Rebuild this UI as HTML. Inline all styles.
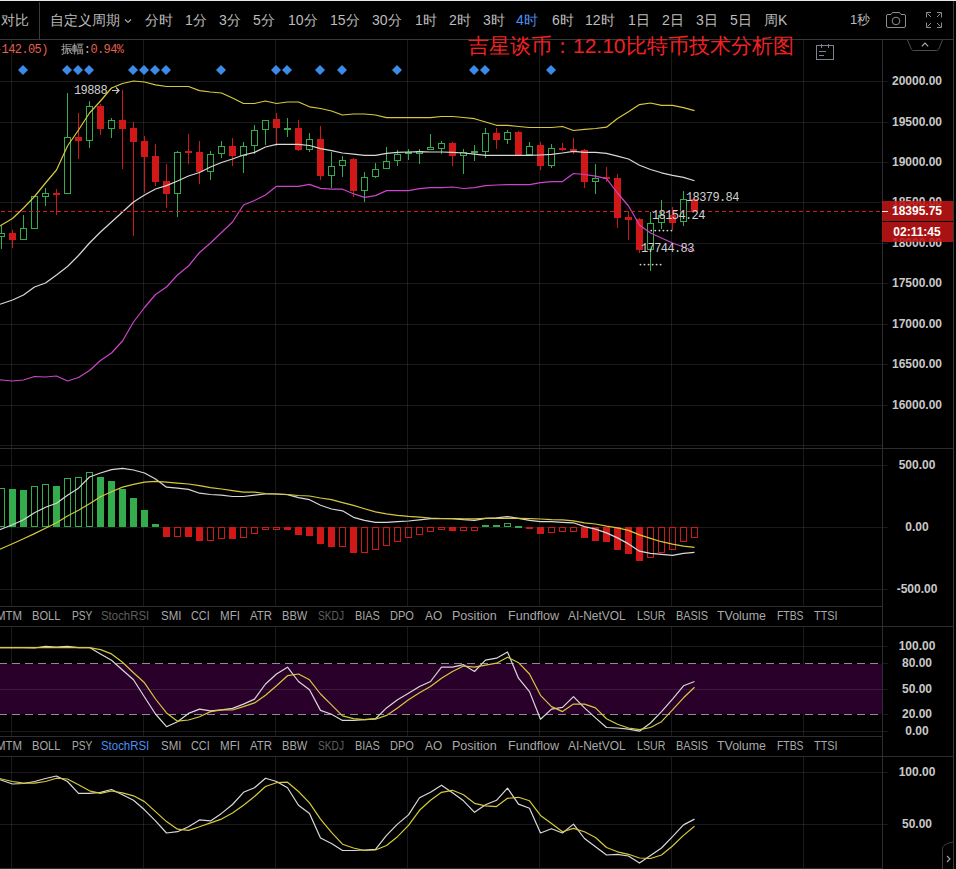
<!DOCTYPE html>
<html><head><meta charset="utf-8"><style>
html,body{margin:0;padding:0;background:#000;}
body{width:956px;height:869px;position:relative;overflow:hidden;font-family:"Liberation Sans", sans-serif;}
svg{position:absolute;left:0;top:0;}
.t{position:absolute;white-space:nowrap;line-height:1;}
.c{text-align:center;}
rect,line{shape-rendering:crispEdges;}
</style></head><body>
<svg width="956" height="869" viewBox="0 0 956 869">
<line x1="11.5" y1="40" x2="11.5" y2="448" stroke="rgba(255,255,255,0.1)"/>
<line x1="11.5" y1="448" x2="11.5" y2="606" stroke="rgba(255,255,255,0.1)"/>
<line x1="11.5" y1="626" x2="11.5" y2="736" stroke="rgba(255,255,255,0.1)"/>
<line x1="11.5" y1="756" x2="11.5" y2="869" stroke="rgba(255,255,255,0.1)"/>
<line x1="143.5" y1="40" x2="143.5" y2="448" stroke="rgba(255,255,255,0.1)"/>
<line x1="143.5" y1="448" x2="143.5" y2="606" stroke="rgba(255,255,255,0.1)"/>
<line x1="143.5" y1="626" x2="143.5" y2="736" stroke="rgba(255,255,255,0.1)"/>
<line x1="143.5" y1="756" x2="143.5" y2="869" stroke="rgba(255,255,255,0.1)"/>
<line x1="275.5" y1="40" x2="275.5" y2="448" stroke="rgba(255,255,255,0.1)"/>
<line x1="275.5" y1="448" x2="275.5" y2="606" stroke="rgba(255,255,255,0.1)"/>
<line x1="275.5" y1="626" x2="275.5" y2="736" stroke="rgba(255,255,255,0.1)"/>
<line x1="275.5" y1="756" x2="275.5" y2="869" stroke="rgba(255,255,255,0.1)"/>
<line x1="407.5" y1="40" x2="407.5" y2="448" stroke="rgba(255,255,255,0.1)"/>
<line x1="407.5" y1="448" x2="407.5" y2="606" stroke="rgba(255,255,255,0.1)"/>
<line x1="407.5" y1="626" x2="407.5" y2="736" stroke="rgba(255,255,255,0.1)"/>
<line x1="407.5" y1="756" x2="407.5" y2="869" stroke="rgba(255,255,255,0.1)"/>
<line x1="539.5" y1="40" x2="539.5" y2="448" stroke="rgba(255,255,255,0.1)"/>
<line x1="539.5" y1="448" x2="539.5" y2="606" stroke="rgba(255,255,255,0.1)"/>
<line x1="539.5" y1="626" x2="539.5" y2="736" stroke="rgba(255,255,255,0.1)"/>
<line x1="539.5" y1="756" x2="539.5" y2="869" stroke="rgba(255,255,255,0.1)"/>
<line x1="671.5" y1="40" x2="671.5" y2="448" stroke="rgba(255,255,255,0.1)"/>
<line x1="671.5" y1="448" x2="671.5" y2="606" stroke="rgba(255,255,255,0.1)"/>
<line x1="671.5" y1="626" x2="671.5" y2="736" stroke="rgba(255,255,255,0.1)"/>
<line x1="671.5" y1="756" x2="671.5" y2="869" stroke="rgba(255,255,255,0.1)"/>
<line x1="803.5" y1="40" x2="803.5" y2="448" stroke="rgba(255,255,255,0.1)"/>
<line x1="803.5" y1="448" x2="803.5" y2="606" stroke="rgba(255,255,255,0.1)"/>
<line x1="803.5" y1="626" x2="803.5" y2="736" stroke="rgba(255,255,255,0.1)"/>
<line x1="803.5" y1="756" x2="803.5" y2="869" stroke="rgba(255,255,255,0.1)"/>
<line x1="0" y1="81.5" x2="888" y2="81.5" stroke="rgba(255,255,255,0.1)"/>
<line x1="0" y1="122.5" x2="888" y2="122.5" stroke="rgba(255,255,255,0.1)"/>
<line x1="0" y1="162.5" x2="888" y2="162.5" stroke="rgba(255,255,255,0.1)"/>
<line x1="0" y1="202.5" x2="888" y2="202.5" stroke="rgba(255,255,255,0.1)"/>
<line x1="0" y1="243.5" x2="888" y2="243.5" stroke="rgba(255,255,255,0.1)"/>
<line x1="0" y1="283.5" x2="888" y2="283.5" stroke="rgba(255,255,255,0.1)"/>
<line x1="0" y1="324.5" x2="888" y2="324.5" stroke="rgba(255,255,255,0.1)"/>
<line x1="0" y1="364.5" x2="888" y2="364.5" stroke="rgba(255,255,255,0.1)"/>
<line x1="0" y1="405.5" x2="888" y2="405.5" stroke="rgba(255,255,255,0.1)"/>
<line x1="0" y1="445.5" x2="882" y2="445.5" stroke="rgba(255,255,255,0.1)"/>
<line x1="0" y1="465.5" x2="888" y2="465.5" stroke="rgba(255,255,255,0.1)"/>
<line x1="0" y1="527.5" x2="888" y2="527.5" stroke="rgba(255,255,255,0.1)"/>
<line x1="0" y1="589.5" x2="888" y2="589.5" stroke="rgba(255,255,255,0.1)"/>
<rect x="0" y="664" width="882" height="50" fill="#29002a"/>
<line x1="0" y1="646.5" x2="888" y2="646.5" stroke="rgba(255,255,255,0.1)"/>
<line x1="0" y1="689.5" x2="888" y2="689.5" stroke="rgba(255,255,255,0.1)"/>
<line x1="0" y1="731.5" x2="888" y2="731.5" stroke="rgba(255,255,255,0.1)"/>
<line x1="0" y1="663.5" x2="882" y2="663.5" stroke="#8c8c94" stroke-dasharray="8 5" stroke-dashoffset="1"/>
<line x1="882" y1="663.5" x2="888" y2="663.5" stroke="rgba(255,255,255,0.1)"/>
<line x1="0" y1="714.5" x2="882" y2="714.5" stroke="#8c8c94" stroke-dasharray="8 5" stroke-dashoffset="1"/>
<line x1="882" y1="714.5" x2="888" y2="714.5" stroke="rgba(255,255,255,0.1)"/>
<line x1="0" y1="772.5" x2="888" y2="772.5" stroke="rgba(255,255,255,0.1)"/>
<line x1="0" y1="824.5" x2="888" y2="824.5" stroke="rgba(255,255,255,0.1)"/>
<rect x="0" y="0" width="956" height="1" fill="#e6e6e6"/>
<line x1="0" y1="39.5" x2="954" y2="39.5" stroke="#383838"/>
<line x1="39.5" y1="2" x2="39.5" y2="39" stroke="#3a3a3a"/>
<line x1="882.5" y1="40" x2="882.5" y2="869" stroke="#2c2d33"/>
<line x1="953.5" y1="1" x2="953.5" y2="869" stroke="#3a3a3a"/>
<line x1="0" y1="448.5" x2="954" y2="448.5" stroke="#2c2d33"/>
<line x1="0" y1="606.5" x2="882" y2="606.5" stroke="#2c2d33"/>
<line x1="0" y1="626.5" x2="954" y2="626.5" stroke="#2c2d33"/>
<line x1="0" y1="736.5" x2="882" y2="736.5" stroke="#2c2d33"/>
<line x1="0" y1="756.5" x2="954" y2="756.5" stroke="#2c2d33"/>
<line x1="0" y1="868.5" x2="883" y2="868.5" stroke="#2c2d33"/>
<rect x="1" y="226" width="1" height="7" fill="#34ac4e"/>
<rect x="1" y="237" width="1" height="12" fill="#34ac4e"/>
<rect x="-1.5" y="233.5" width="6" height="3" fill="none" stroke="#34ac4e"/>
<rect x="12" y="230" width="1" height="3" fill="#d11818"/>
<rect x="12" y="240" width="1" height="8" fill="#d11818"/>
<rect x="9" y="233" width="7" height="7" fill="#d11818"/>
<rect x="23" y="215" width="1" height="13" fill="#34ac4e"/>
<rect x="20.5" y="228.5" width="6" height="11" fill="none" stroke="#34ac4e"/>
<rect x="31.5" y="196.5" width="6" height="32" fill="none" stroke="#34ac4e"/>
<rect x="45" y="188" width="1" height="5" fill="#34ac4e"/>
<rect x="45" y="197" width="1" height="9" fill="#34ac4e"/>
<rect x="42.5" y="193.5" width="6" height="3" fill="none" stroke="#34ac4e"/>
<rect x="56" y="189" width="1" height="4" fill="#d11818"/>
<rect x="56" y="195" width="1" height="20" fill="#d11818"/>
<rect x="53" y="193" width="7" height="2" fill="#d11818"/>
<rect x="67" y="93" width="1" height="44" fill="#34ac4e"/>
<rect x="64.5" y="137.5" width="6" height="56" fill="none" stroke="#34ac4e"/>
<rect x="78" y="113" width="1" height="24" fill="#d11818"/>
<rect x="78" y="141" width="1" height="18" fill="#d11818"/>
<rect x="75" y="137" width="7" height="4" fill="#d11818"/>
<rect x="89" y="101" width="1" height="5" fill="#34ac4e"/>
<rect x="89" y="141" width="1" height="7" fill="#34ac4e"/>
<rect x="86.5" y="106.5" width="6" height="34" fill="none" stroke="#34ac4e"/>
<rect x="100" y="104" width="1" height="2" fill="#d11818"/>
<rect x="100" y="129" width="1" height="6" fill="#d11818"/>
<rect x="97" y="106" width="7" height="23" fill="#d11818"/>
<rect x="111" y="118" width="1" height="2" fill="#34ac4e"/>
<rect x="111" y="129" width="1" height="9" fill="#34ac4e"/>
<rect x="108.5" y="120.5" width="6" height="8" fill="none" stroke="#34ac4e"/>
<rect x="122" y="90" width="1" height="30" fill="#d11818"/>
<rect x="122" y="129" width="1" height="40" fill="#d11818"/>
<rect x="119" y="120" width="7" height="9" fill="#d11818"/>
<rect x="133" y="122" width="1" height="6" fill="#d11818"/>
<rect x="133" y="142" width="1" height="94" fill="#d11818"/>
<rect x="130" y="128" width="7" height="14" fill="#d11818"/>
<rect x="144" y="136" width="1" height="5" fill="#d11818"/>
<rect x="144" y="157" width="1" height="36" fill="#d11818"/>
<rect x="141" y="141" width="7" height="16" fill="#d11818"/>
<rect x="155" y="144" width="1" height="12" fill="#d11818"/>
<rect x="155" y="182" width="1" height="4" fill="#d11818"/>
<rect x="152" y="156" width="7" height="26" fill="#d11818"/>
<rect x="166" y="164" width="1" height="17" fill="#d11818"/>
<rect x="166" y="194" width="1" height="14" fill="#d11818"/>
<rect x="163" y="181" width="7" height="13" fill="#d11818"/>
<rect x="177" y="151" width="1" height="1" fill="#34ac4e"/>
<rect x="177" y="194" width="1" height="23" fill="#34ac4e"/>
<rect x="174.5" y="152.5" width="6" height="41" fill="none" stroke="#34ac4e"/>
<rect x="188" y="134" width="1" height="17" fill="#d11818"/>
<rect x="188" y="153" width="1" height="11" fill="#d11818"/>
<rect x="185" y="151" width="7" height="2" fill="#d11818"/>
<rect x="199" y="141" width="1" height="11" fill="#d11818"/>
<rect x="199" y="172" width="1" height="12" fill="#d11818"/>
<rect x="196" y="152" width="7" height="20" fill="#d11818"/>
<rect x="210" y="151" width="1" height="3" fill="#34ac4e"/>
<rect x="210" y="172" width="1" height="8" fill="#34ac4e"/>
<rect x="207.5" y="154.5" width="6" height="17" fill="none" stroke="#34ac4e"/>
<rect x="221" y="141" width="1" height="5" fill="#34ac4e"/>
<rect x="221" y="154" width="1" height="4" fill="#34ac4e"/>
<rect x="218.5" y="146.5" width="6" height="7" fill="none" stroke="#34ac4e"/>
<rect x="232" y="138" width="1" height="8" fill="#d11818"/>
<rect x="232" y="156" width="1" height="10" fill="#d11818"/>
<rect x="229" y="146" width="7" height="10" fill="#d11818"/>
<rect x="243" y="142" width="1" height="4" fill="#34ac4e"/>
<rect x="243" y="156" width="1" height="17" fill="#34ac4e"/>
<rect x="240.5" y="146.5" width="6" height="9" fill="none" stroke="#34ac4e"/>
<rect x="254" y="125" width="1" height="5" fill="#34ac4e"/>
<rect x="254" y="146" width="1" height="8" fill="#34ac4e"/>
<rect x="251.5" y="130.5" width="6" height="15" fill="none" stroke="#34ac4e"/>
<rect x="265" y="130" width="1" height="15" fill="#34ac4e"/>
<rect x="262.5" y="120.5" width="6" height="9" fill="none" stroke="#34ac4e"/>
<rect x="276" y="113" width="1" height="6" fill="#d11818"/>
<rect x="276" y="128" width="1" height="18" fill="#d11818"/>
<rect x="273" y="119" width="7" height="9" fill="#d11818"/>
<rect x="287" y="118" width="1" height="10" fill="#34ac4e"/>
<rect x="287" y="130" width="1" height="7" fill="#34ac4e"/>
<rect x="284.5" y="128.5" width="6" height="1" fill="none" stroke="#34ac4e"/>
<rect x="298" y="120" width="1" height="8" fill="#d11818"/>
<rect x="298" y="150" width="1" height="1" fill="#d11818"/>
<rect x="295" y="128" width="7" height="22" fill="#d11818"/>
<rect x="309" y="133" width="1" height="6" fill="#34ac4e"/>
<rect x="309" y="150" width="1" height="2" fill="#34ac4e"/>
<rect x="306.5" y="139.5" width="6" height="10" fill="none" stroke="#34ac4e"/>
<rect x="320" y="126" width="1" height="13" fill="#d11818"/>
<rect x="320" y="176" width="1" height="4" fill="#d11818"/>
<rect x="317" y="139" width="7" height="37" fill="#d11818"/>
<rect x="331" y="152" width="1" height="14" fill="#34ac4e"/>
<rect x="331" y="176" width="1" height="12" fill="#34ac4e"/>
<rect x="328.5" y="166.5" width="6" height="9" fill="none" stroke="#34ac4e"/>
<rect x="342" y="156" width="1" height="4" fill="#34ac4e"/>
<rect x="342" y="166" width="1" height="11" fill="#34ac4e"/>
<rect x="339.5" y="160.5" width="6" height="5" fill="none" stroke="#34ac4e"/>
<rect x="353" y="158" width="1" height="1" fill="#d11818"/>
<rect x="353" y="191" width="1" height="6" fill="#d11818"/>
<rect x="350" y="159" width="7" height="32" fill="#d11818"/>
<rect x="364" y="172" width="1" height="5" fill="#34ac4e"/>
<rect x="364" y="191" width="1" height="11" fill="#34ac4e"/>
<rect x="361.5" y="177.5" width="6" height="13" fill="none" stroke="#34ac4e"/>
<rect x="375" y="163" width="1" height="6" fill="#34ac4e"/>
<rect x="375" y="177" width="1" height="1" fill="#34ac4e"/>
<rect x="372.5" y="169.5" width="6" height="7" fill="none" stroke="#34ac4e"/>
<rect x="386" y="147" width="1" height="14" fill="#34ac4e"/>
<rect x="383.5" y="161.5" width="6" height="7" fill="none" stroke="#34ac4e"/>
<rect x="397" y="150" width="1" height="4" fill="#34ac4e"/>
<rect x="397" y="161" width="1" height="5" fill="#34ac4e"/>
<rect x="394.5" y="154.5" width="6" height="6" fill="none" stroke="#34ac4e"/>
<rect x="408" y="149" width="1" height="3" fill="#34ac4e"/>
<rect x="408" y="154" width="1" height="6" fill="#34ac4e"/>
<rect x="405.5" y="152.5" width="6" height="1" fill="none" stroke="#34ac4e"/>
<rect x="419" y="149" width="1" height="2" fill="#34ac4e"/>
<rect x="419" y="154" width="1" height="10" fill="#34ac4e"/>
<rect x="416.5" y="151.5" width="6" height="2" fill="none" stroke="#34ac4e"/>
<rect x="430" y="134" width="1" height="13" fill="#34ac4e"/>
<rect x="427.5" y="147.5" width="6" height="2" fill="none" stroke="#34ac4e"/>
<rect x="441" y="141" width="1" height="2" fill="#34ac4e"/>
<rect x="441" y="149" width="1" height="5" fill="#34ac4e"/>
<rect x="438.5" y="143.5" width="6" height="5" fill="none" stroke="#34ac4e"/>
<rect x="452" y="142" width="1" height="1" fill="#d11818"/>
<rect x="452" y="156" width="1" height="10" fill="#d11818"/>
<rect x="449" y="143" width="7" height="13" fill="#d11818"/>
<rect x="463" y="149" width="1" height="3" fill="#34ac4e"/>
<rect x="463" y="156" width="1" height="18" fill="#34ac4e"/>
<rect x="460.5" y="152.5" width="6" height="3" fill="none" stroke="#34ac4e"/>
<rect x="474" y="145" width="1" height="6" fill="#34ac4e"/>
<rect x="474" y="153" width="1" height="8" fill="#34ac4e"/>
<rect x="471.5" y="151.5" width="6" height="1" fill="none" stroke="#34ac4e"/>
<rect x="485" y="128" width="1" height="5" fill="#34ac4e"/>
<rect x="485" y="152" width="1" height="6" fill="#34ac4e"/>
<rect x="482.5" y="133.5" width="6" height="18" fill="none" stroke="#34ac4e"/>
<rect x="496" y="128" width="1" height="5" fill="#d11818"/>
<rect x="496" y="140" width="1" height="9" fill="#d11818"/>
<rect x="493" y="133" width="7" height="7" fill="#d11818"/>
<rect x="507" y="130" width="1" height="2" fill="#34ac4e"/>
<rect x="507" y="140" width="1" height="4" fill="#34ac4e"/>
<rect x="504.5" y="132.5" width="6" height="7" fill="none" stroke="#34ac4e"/>
<rect x="518" y="131" width="1" height="1" fill="#d11818"/>
<rect x="515" y="132" width="7" height="23" fill="#d11818"/>
<rect x="529" y="142" width="1" height="4" fill="#34ac4e"/>
<rect x="526.5" y="146.5" width="6" height="8" fill="none" stroke="#34ac4e"/>
<rect x="540" y="142" width="1" height="3" fill="#d11818"/>
<rect x="540" y="166" width="1" height="4" fill="#d11818"/>
<rect x="537" y="145" width="7" height="21" fill="#d11818"/>
<rect x="551" y="144" width="1" height="4" fill="#34ac4e"/>
<rect x="551" y="166" width="1" height="2" fill="#34ac4e"/>
<rect x="548.5" y="148.5" width="6" height="17" fill="none" stroke="#34ac4e"/>
<rect x="562" y="143" width="1" height="5" fill="#d11818"/>
<rect x="562" y="150" width="1" height="1" fill="#d11818"/>
<rect x="559" y="148" width="7" height="2" fill="#d11818"/>
<rect x="573" y="138" width="1" height="11" fill="#d11818"/>
<rect x="573" y="151" width="1" height="3" fill="#d11818"/>
<rect x="570" y="149" width="7" height="2" fill="#d11818"/>
<rect x="584" y="149" width="1" height="1" fill="#d11818"/>
<rect x="584" y="182" width="1" height="6" fill="#d11818"/>
<rect x="581" y="150" width="7" height="32" fill="#d11818"/>
<rect x="595" y="164" width="1" height="14" fill="#34ac4e"/>
<rect x="595" y="182" width="1" height="12" fill="#34ac4e"/>
<rect x="592.5" y="178.5" width="6" height="3" fill="none" stroke="#34ac4e"/>
<rect x="606" y="167" width="1" height="10" fill="#d11818"/>
<rect x="606" y="179" width="1" height="3" fill="#d11818"/>
<rect x="603" y="177" width="7" height="2" fill="#d11818"/>
<rect x="617" y="174" width="1" height="4" fill="#d11818"/>
<rect x="617" y="218" width="1" height="10" fill="#d11818"/>
<rect x="614" y="178" width="7" height="40" fill="#d11818"/>
<rect x="628" y="211" width="1" height="6" fill="#d11818"/>
<rect x="628" y="220" width="1" height="20" fill="#d11818"/>
<rect x="625" y="217" width="7" height="3" fill="#d11818"/>
<rect x="639" y="218" width="1" height="1" fill="#d11818"/>
<rect x="639" y="250" width="1" height="3" fill="#d11818"/>
<rect x="636" y="219" width="7" height="31" fill="#d11818"/>
<rect x="650" y="212" width="1" height="11" fill="#34ac4e"/>
<rect x="650" y="250" width="1" height="21" fill="#34ac4e"/>
<rect x="647.5" y="223.5" width="6" height="26" fill="none" stroke="#34ac4e"/>
<rect x="661" y="200" width="1" height="15" fill="#34ac4e"/>
<rect x="661" y="223" width="1" height="6" fill="#34ac4e"/>
<rect x="658.5" y="215.5" width="6" height="7" fill="none" stroke="#34ac4e"/>
<rect x="672" y="207" width="1" height="8" fill="#d11818"/>
<rect x="672" y="223" width="1" height="7" fill="#d11818"/>
<rect x="669" y="215" width="7" height="8" fill="#d11818"/>
<rect x="683" y="191" width="1" height="8" fill="#34ac4e"/>
<rect x="683" y="222" width="1" height="4" fill="#34ac4e"/>
<rect x="680.5" y="199.5" width="6" height="22" fill="none" stroke="#34ac4e"/>
<rect x="691" y="199" width="7" height="13" fill="#d11818"/>
<polyline points="0,379.9 1.5,380 12.5,381 23.5,380 34.5,376.5 45.5,377 56.5,376 67.5,381 78.5,377.5 89.5,370.5 100.5,360.5 111.5,353 122.5,341 133.5,322 144.5,307.5 155.5,294.5 166.5,287 177.5,275 188.5,266 199.5,252.5 210.5,243 221.5,232.5 232.5,222 243.5,205 254.5,200.5 265.5,195 276.5,186.3 287.5,186.3 298.5,186.3 309.5,184.4 320.5,188.4 331.5,189.2 342.5,189.2 353.5,193.8 364.5,197.4 375.5,195.6 386.5,190.6 397.5,190.6 408.5,190.6 419.5,188.6 430.5,187.6 441.5,187.6 452.5,187 463.5,188.5 474.5,187.6 485.5,185.6 496.5,185 507.5,184.6 518.5,184.6 529.5,184.6 540.5,182.6 551.5,181.6 562.5,181.6 573.5,173.5 584.5,174.5 595.5,176.2 606.5,178.7 617.5,193 628.5,206 639.5,225 650.5,233 661.5,238 672.5,243 683.5,247 694.5,251" fill="none" stroke="#cc44c8" stroke-width="1.2" stroke-linejoin="round"/>
<polyline points="0,304.3 1.5,303.8 12.5,300 23.5,295 34.5,287 45.5,283 56.5,275 67.5,266.5 78.5,255.5 89.5,243 100.5,232 111.5,222 122.5,212 133.5,202 144.5,195 155.5,189 166.5,185.6 177.5,181 188.5,176 199.5,172.5 210.5,167 221.5,162.5 232.5,159 243.5,155 254.5,152.4 265.5,147 276.5,144.3 287.5,144.3 298.5,144.3 309.5,145.5 320.5,148.6 331.5,150.6 342.5,153 353.5,154.2 364.5,155.4 375.5,155.4 386.5,153.4 397.5,152.4 408.5,152 419.5,151.6 430.5,152 441.5,152 452.5,152.4 463.5,153 474.5,154.2 485.5,155.4 496.5,155.4 507.5,155.4 518.5,155.4 529.5,155.4 540.5,155 551.5,154.4 562.5,153 573.5,151.4 584.5,152.3 595.5,152.4 606.5,153.3 617.5,156.1 628.5,159 639.5,165.3 650.5,169.5 661.5,172.8 672.5,175.4 683.5,177.4 694.5,180.7" fill="none" stroke="#d8d8d8" stroke-width="1.2" stroke-linejoin="round"/>
<polyline points="0,225.9 1.5,225 12.5,218.5 23.5,208 34.5,196.5 45.5,183 56.5,170 67.5,146 78.5,130 89.5,113 100.5,101 111.5,88 122.5,83.5 133.5,81 144.5,82 155.5,84.8 166.5,86.5 177.5,86.5 188.5,86.5 199.5,90.6 210.5,92 221.5,93 232.5,98 243.5,103.5 254.5,103.5 265.5,101 276.5,103.5 287.5,102 298.5,102 309.5,106.8 320.5,108.5 331.5,111 342.5,115 353.5,114 364.5,114 375.5,115 386.5,117.7 397.5,117.7 408.5,117.7 419.5,117.7 430.5,117.7 441.5,116.5 452.5,116.5 463.5,117.5 474.5,118.7 485.5,122 496.5,125.3 507.5,125.3 518.5,126.5 529.5,127.5 540.5,127.5 551.5,127.5 562.5,126.5 573.5,130.5 584.5,129.3 595.5,128.5 606.5,127.2 617.5,118.5 628.5,111.8 639.5,104.6 650.5,103 661.5,105.4 672.5,105.4 683.5,107.6 694.5,110.6" fill="none" stroke="#d6c83c" stroke-width="1.2" stroke-linejoin="round"/>
<line x1="0" y1="211.5" x2="882" y2="211.5" stroke="#d41c1c" stroke-dasharray="4 3" stroke-dashoffset="-1"/>
<line x1="882" y1="211.5" x2="888" y2="211.5" stroke="#e8e8e8"/>
<circle cx="651.3" cy="230.6" r="0.95" fill="#d0d0d0"/>
<circle cx="655.3" cy="230.6" r="0.95" fill="#d0d0d0"/>
<circle cx="659.4" cy="230.6" r="0.95" fill="#d0d0d0"/>
<circle cx="663.4" cy="230.6" r="0.95" fill="#d0d0d0"/>
<circle cx="667.4" cy="230.6" r="0.95" fill="#d0d0d0"/>
<circle cx="671.4" cy="230.6" r="0.95" fill="#d0d0d0"/>
<circle cx="640.5" cy="264.6" r="0.95" fill="#d0d0d0"/>
<circle cx="644.5" cy="264.6" r="0.95" fill="#d0d0d0"/>
<circle cx="648.6" cy="264.6" r="0.95" fill="#d0d0d0"/>
<circle cx="652.6" cy="264.6" r="0.95" fill="#d0d0d0"/>
<circle cx="656.6" cy="264.6" r="0.95" fill="#d0d0d0"/>
<circle cx="660.6" cy="264.6" r="0.95" fill="#d0d0d0"/>
<path d="M112 90.5 H119 M116 87.5 L119 90.5 L116 93.5" fill="none" stroke="#c8c8c8" stroke-width="1.2"/>
<path d="M125 19.5 L128 22.3 L131 19.5" fill="none" stroke="#b4b4b4" stroke-width="1.1"/>
<path d="M23.0 65L28.0 70L23.0 75L18.0 70Z" fill="#3d8be8"/>
<path d="M67.0 65L72.0 70L67.0 75L62.0 70Z" fill="#3d8be8"/>
<path d="M78.0 65L83.0 70L78.0 75L73.0 70Z" fill="#3d8be8"/>
<path d="M89.0 65L94.0 70L89.0 75L84.0 70Z" fill="#3d8be8"/>
<path d="M133.0 65L138.0 70L133.0 75L128.0 70Z" fill="#3d8be8"/>
<path d="M144.0 65L149.0 70L144.0 75L139.0 70Z" fill="#3d8be8"/>
<path d="M155.0 65L160.0 70L155.0 75L150.0 70Z" fill="#3d8be8"/>
<path d="M166.0 65L171.0 70L166.0 75L161.0 70Z" fill="#3d8be8"/>
<path d="M221.0 65L226.0 70L221.0 75L216.0 70Z" fill="#3d8be8"/>
<path d="M276.0 65L281.0 70L276.0 75L271.0 70Z" fill="#3d8be8"/>
<path d="M287.0 65L292.0 70L287.0 75L282.0 70Z" fill="#3d8be8"/>
<path d="M320.0 65L325.0 70L320.0 75L315.0 70Z" fill="#3d8be8"/>
<path d="M342.0 65L347.0 70L342.0 75L337.0 70Z" fill="#3d8be8"/>
<path d="M397.0 65L402.0 70L397.0 75L392.0 70Z" fill="#3d8be8"/>
<path d="M474.0 65L479.0 70L474.0 75L469.0 70Z" fill="#3d8be8"/>
<path d="M485.0 65L490.0 70L485.0 75L480.0 70Z" fill="#3d8be8"/>
<path d="M551.0 65L556.0 70L551.0 75L546.0 70Z" fill="#3d8be8"/>
<rect x="-1.5" y="488.5" width="6" height="38" fill="none" stroke="#34ac4e"/>
<rect x="9" y="489" width="7" height="38" fill="#34ac4e"/>
<rect x="20" y="490" width="7" height="37" fill="#34ac4e"/>
<rect x="31.5" y="486.5" width="6" height="40" fill="none" stroke="#34ac4e"/>
<rect x="42.5" y="484.5" width="6" height="42" fill="none" stroke="#34ac4e"/>
<rect x="53" y="486" width="7" height="41" fill="#34ac4e"/>
<rect x="64.5" y="478.5" width="6" height="48" fill="none" stroke="#34ac4e"/>
<rect x="75.5" y="477.5" width="6" height="49" fill="none" stroke="#34ac4e"/>
<rect x="86.5" y="472.5" width="6" height="54" fill="none" stroke="#34ac4e"/>
<rect x="97" y="477" width="7" height="50" fill="#34ac4e"/>
<rect x="108" y="481" width="7" height="46" fill="#34ac4e"/>
<rect x="119" y="489" width="7" height="38" fill="#34ac4e"/>
<rect x="130" y="498" width="7" height="29" fill="#34ac4e"/>
<rect x="141" y="510" width="7" height="17" fill="#34ac4e"/>
<rect x="152" y="524" width="7" height="3" fill="#34ac4e"/>
<rect x="163" y="527" width="7" height="10" fill="#d11818"/>
<rect x="174.5" y="527.5" width="6" height="9" fill="none" stroke="#d11818"/>
<rect x="185" y="527" width="7" height="10" fill="#d11818"/>
<rect x="196" y="527" width="7" height="14" fill="#d11818"/>
<rect x="207.5" y="527.5" width="6" height="13" fill="none" stroke="#d11818"/>
<rect x="218.5" y="527.5" width="6" height="11" fill="none" stroke="#d11818"/>
<rect x="229" y="527" width="7" height="12" fill="#d11818"/>
<rect x="240.5" y="527.5" width="6" height="10" fill="none" stroke="#d11818"/>
<rect x="251.5" y="527.5" width="6" height="6" fill="none" stroke="#d11818"/>
<rect x="262.5" y="527.5" width="6" height="2" fill="none" stroke="#d11818"/>
<rect x="273.5" y="527.5" width="6" height="2" fill="none" stroke="#d11818"/>
<rect x="284" y="527" width="7" height="3" fill="#d11818"/>
<rect x="295" y="527" width="7" height="8" fill="#d11818"/>
<rect x="306" y="527" width="7" height="9" fill="#d11818"/>
<rect x="317" y="527" width="7" height="17" fill="#d11818"/>
<rect x="328" y="527" width="7" height="20" fill="#d11818"/>
<rect x="339.5" y="527.5" width="6" height="19" fill="none" stroke="#d11818"/>
<rect x="350" y="527" width="7" height="26" fill="#d11818"/>
<rect x="361.5" y="527.5" width="6" height="25" fill="none" stroke="#d11818"/>
<rect x="372.5" y="527.5" width="6" height="22" fill="none" stroke="#d11818"/>
<rect x="383.5" y="527.5" width="6" height="18" fill="none" stroke="#d11818"/>
<rect x="394.5" y="527.5" width="6" height="14" fill="none" stroke="#d11818"/>
<rect x="405.5" y="527.5" width="6" height="10" fill="none" stroke="#d11818"/>
<rect x="416.5" y="527.5" width="6" height="7" fill="none" stroke="#d11818"/>
<rect x="427.5" y="527.5" width="6" height="4" fill="none" stroke="#d11818"/>
<rect x="438.5" y="527.5" width="6" height="2" fill="none" stroke="#d11818"/>
<rect x="449" y="527" width="7" height="4" fill="#d11818"/>
<rect x="460.5" y="527.5" width="6" height="3" fill="none" stroke="#d11818"/>
<rect x="471.5" y="527.5" width="6" height="3" fill="none" stroke="#d11818"/>
<rect x="482" y="525" width="7" height="2" fill="#34ac4e"/>
<rect x="493" y="525" width="7" height="2" fill="#34ac4e"/>
<rect x="504.5" y="523.5" width="6" height="3" fill="none" stroke="#34ac4e"/>
<rect x="515" y="526" width="7" height="2" fill="#34ac4e"/>
<rect x="526" y="527" width="7" height="2" fill="#d11818"/>
<rect x="537" y="527" width="7" height="7" fill="#d11818"/>
<rect x="548.5" y="527.5" width="6" height="5" fill="none" stroke="#d11818"/>
<rect x="559.5" y="527.5" width="6" height="4" fill="none" stroke="#d11818"/>
<rect x="570.5" y="527.5" width="6" height="4" fill="none" stroke="#d11818"/>
<rect x="581" y="527" width="7" height="11" fill="#d11818"/>
<rect x="592" y="527" width="7" height="14" fill="#d11818"/>
<rect x="603" y="527" width="7" height="15" fill="#d11818"/>
<rect x="614" y="527" width="7" height="23" fill="#d11818"/>
<rect x="625" y="527" width="7" height="27" fill="#d11818"/>
<rect x="636" y="527" width="7" height="34" fill="#d11818"/>
<rect x="647.5" y="527.5" width="6" height="30" fill="none" stroke="#d11818"/>
<rect x="658.5" y="527.5" width="6" height="25" fill="none" stroke="#d11818"/>
<rect x="669.5" y="527.5" width="6" height="22" fill="none" stroke="#d11818"/>
<rect x="680.5" y="527.5" width="6" height="14" fill="none" stroke="#d11818"/>
<rect x="691.5" y="527.5" width="6" height="10" fill="none" stroke="#d11818"/>
<polyline points="0,529.6 1.5,529.0 12.5,524.8 23.5,519.8 34.5,512.8 45.5,507.3 56.5,503.2 67.5,495.2 78.5,488.2 89.5,477.0 100.5,473.0 111.5,469.6 122.5,468.3 133.5,470.0 144.5,473.0 155.5,479.0 166.5,487.2 177.5,488.2 188.5,489.4 199.5,493.2 210.5,494.5 221.5,495.2 232.5,496.5 243.5,496.5 254.5,495.2 265.5,494.0 276.5,494.0 287.5,494.7 298.5,497.7 309.5,499.7 320.5,505.3 331.5,509.0 342.5,510.8 353.5,517.3 364.5,520.3 375.5,522.3 386.5,522.3 397.5,521.6 408.5,521.0 419.5,519.8 430.5,518.6 441.5,518.6 452.5,518.6 463.5,519.6 474.5,520.3 485.5,518.3 496.5,517.8 507.5,516.6 518.5,518.3 529.5,520.3 540.5,521.6 551.5,521.6 562.5,522.3 573.5,522.8 584.5,526.6 595.5,529.1 606.5,532.9 617.5,537.9 628.5,543.9 639.5,551.2 650.5,553.3 661.5,554.3 672.5,555.4 683.5,553.3 694.5,552.4" fill="none" stroke="#d8d8d8" stroke-width="1.2" stroke-linejoin="round"/>
<polyline points="0,549.2 1.5,548.5 12.5,543.7 23.5,538.7 34.5,533.6 45.5,528.3 56.5,522.8 67.5,516.0 78.5,510.2 89.5,503.8 100.5,496.8 111.5,491.8 122.5,487.1 133.5,484.3 144.5,482.1 155.5,481.4 166.5,482.2 177.5,483.2 188.5,484.0 199.5,485.7 210.5,487.7 221.5,489.0 232.5,490.7 243.5,492.2 254.5,492.2 265.5,493.5 276.5,494.0 287.5,494.5 298.5,495.5 309.5,496 320.5,498 331.5,499.7 342.5,502.6 353.5,505.4 364.5,508.7 375.5,511.8 386.5,513.9 397.5,515.3 408.5,516.4 419.5,517.2 430.5,518 441.5,518.5 452.5,518.7 463.5,518.8 474.5,518.8 485.5,518.3 496.5,518.3 507.5,518.3 518.5,518.3 529.5,518.6 540.5,519.0 551.5,519.6 562.5,519.8 573.5,520.8 584.5,522.8 595.5,524.0 606.5,526.1 617.5,527.9 628.5,530.4 639.5,534.9 650.5,538.4 661.5,541.7 672.5,544.2 683.5,546.2 694.5,547.4" fill="none" stroke="#d6c83c" stroke-width="1.2" stroke-linejoin="round"/>
<polyline points="0,647.6 1.5,647.6 12.5,647.6 23.5,647.6 34.5,648 45.5,646.4 56.5,647 67.5,646.4 78.5,647.6 89.5,647.6 100.5,654 111.5,660.2 122.5,670 133.5,679.8 144.5,697 155.5,714 166.5,726.7 177.5,721.7 188.5,713.4 199.5,709.1 210.5,710.9 221.5,709.9 232.5,708.4 243.5,704.1 254.5,699.1 265.5,684 276.5,674 287.5,667.2 298.5,681.5 309.5,689.8 320.5,710.4 331.5,714.2 342.5,720.4 353.5,720.4 364.5,719.7 375.5,718.7 386.5,707.9 397.5,699.8 408.5,693.3 419.5,686.5 430.5,681.5 441.5,667.2 452.5,667.2 463.5,664.7 474.5,671.5 485.5,660.2 496.5,658.2 507.5,652.1 518.5,678.2 529.5,691.6 540.5,719.2 551.5,709.1 562.5,707.4 573.5,696.6 584.5,707.9 595.5,717.9 606.5,727.5 617.5,728 628.5,729.2 639.5,731.2 650.5,723 661.5,711.6 672.5,699.1 683.5,685.8 694.5,681.5" fill="none" stroke="#d8d8d8" stroke-width="1.2" stroke-linejoin="round"/>
<polyline points="0,647.6 1.5,647.6 12.5,647.6 23.5,647.6 34.5,647.6 45.5,647.6 56.5,647.6 67.5,647.6 78.5,647.6 89.5,647.6 100.5,649.6 111.5,653.9 122.5,662.2 133.5,672.7 144.5,682.8 155.5,699 166.5,712.9 177.5,721.2 188.5,720 199.5,716.7 210.5,711.6 221.5,709.9 232.5,710 243.5,706.6 254.5,702.9 265.5,695.3 276.5,685.8 287.5,675.7 298.5,674 309.5,679.8 320.5,694 331.5,704.9 342.5,715.9 353.5,718.7 364.5,719.7 375.5,719.2 386.5,715.4 397.5,707.9 408.5,699.8 419.5,692.8 430.5,686.5 441.5,678.2 452.5,671.5 463.5,666 474.5,667.2 485.5,665.2 496.5,663.2 507.5,657.2 518.5,662.7 529.5,674 540.5,695.3 551.5,706.6 562.5,711.6 573.5,704.1 584.5,704.1 595.5,707.9 606.5,718.7 617.5,724.2 628.5,728 639.5,729.7 650.5,727.5 661.5,721.7 672.5,709.9 683.5,697.8 694.5,687.3" fill="none" stroke="#d6c83c" stroke-width="1.2" stroke-linejoin="round"/>
<polyline points="0,779.7 1.5,780.2 12.5,784 23.5,783.5 34.5,781.5 45.5,778.5 56.5,776 67.5,781.5 78.5,793.3 89.5,793.3 100.5,792.3 111.5,789.5 122.5,794.8 133.5,800.3 144.5,809.8 155.5,820.9 166.5,833 177.5,831.7 188.5,826.7 199.5,819.9 210.5,820.9 221.5,813.4 232.5,804.5 243.5,792.3 254.5,787.7 265.5,778.2 276.5,781.5 287.5,787.7 298.5,805.3 309.5,813.4 320.5,838 331.5,843.5 342.5,850.5 353.5,850.5 364.5,850 375.5,849.3 386.5,835.4 397.5,824.1 408.5,814.9 419.5,797.8 430.5,792.3 441.5,785.2 452.5,792.8 463.5,800.8 474.5,812.3 485.5,804.8 496.5,800.3 507.5,788.2 518.5,804.1 529.5,808.3 540.5,833 551.5,828.7 562.5,833 573.5,824.1 584.5,838.5 595.5,846.7 606.5,855 617.5,854.3 628.5,856 639.5,863.1 650.5,855.5 661.5,848 672.5,836.7 683.5,824.9 694.5,819.1" fill="none" stroke="#d8d8d8" stroke-width="1.2" stroke-linejoin="round"/>
<polyline points="0,778.7 1.5,779 12.5,781.5 23.5,783.2 34.5,783.2 45.5,781.5 56.5,778.2 67.5,779 78.5,784.7 89.5,790.8 100.5,793.3 111.5,791 122.5,792.8 133.5,795.8 144.5,801.6 155.5,811.6 166.5,821.6 177.5,829.2 188.5,830.4 199.5,826.7 210.5,822.9 221.5,819.1 232.5,813 243.5,805.3 254.5,796.5 265.5,786.5 276.5,782.7 287.5,782.2 298.5,791.5 309.5,802.8 320.5,819.1 331.5,832.4 342.5,844.2 353.5,848 364.5,850.5 375.5,850 386.5,845.5 397.5,836.7 408.5,825.4 419.5,810.3 430.5,800.3 441.5,792.3 452.5,790.3 463.5,794.8 474.5,803.3 485.5,805.8 496.5,806.6 507.5,798.3 518.5,797.3 529.5,800.8 540.5,815.4 551.5,823.4 562.5,831.7 573.5,828.4 584.5,831.7 595.5,837.5 606.5,847.5 617.5,851.8 628.5,854.3 639.5,858 650.5,858.5 661.5,855 672.5,846 683.5,835.4 694.5,826.2" fill="none" stroke="#d6c83c" stroke-width="1.2" stroke-linejoin="round"/>
<g fill="none" stroke="#7c8290" stroke-width="1"><rect x="816.5" y="45.5" width="17" height="14"/><line x1="821.5" y1="44" x2="821.5" y2="48"/><line x1="828.5" y1="44" x2="828.5" y2="48"/><line x1="819" y1="51.5" x2="826" y2="51.5"/><line x1="819" y1="55.5" x2="824" y2="55.5"/></g>
<path d="M907.5 40 L911.5 49.5 Q912 50.5 913.5 50.5 L936.5 50.5 Q938 50.5 938.5 49.5 L942.5 40" fill="#000" stroke="#4a4c52"/>
<path d="M921.8 46.3 L925 43 L928.2 46.3" fill="none" stroke="#b0b0b0" stroke-width="1.1"/>
<g fill="none" stroke="#8e8e8e" stroke-width="1"><path d="M888 14.5 H891 L892.5 12.5 H899.5 L901 14.5 H904 Q905.5 14.5 905.5 16 V26 Q905.5 27.5 904 27.5 H888 Q886.5 27.5 886.5 26 V16 Q886.5 14.5 888 14.5 Z"/><circle cx="896" cy="21" r="3.8"/></g>
<g fill="none" stroke="#8e8e8e" stroke-width="1"><path d="M926.5 17.5 V12.5 H931"/><path d="M937 12.5 H941.5 V17.5"/><path d="M926.5 22.5 V27.5 H931"/><path d="M937 27.5 H941.5 V22.5"/><path d="M927.5 13.5 L931 17"/><path d="M940.5 13.5 L937 17"/><path d="M927.5 26.5 L931 23"/><path d="M940.5 26.5 L937 23"/></g>
<path d="M953.5 841.8 Q946.5 843.2 944 845.5 Q942.5 846.8 942.5 849.5 V869" fill="none" stroke="#3e3e3e"/>
<path d="M947 856 L950 859 L947 862" fill="none" stroke="#a8a8a8" stroke-width="1.1"/>
</svg>
<div class="t" style="left:1px;top:13px;font-size:14px;color:#bcbcbc;font-family:'Liberation Sans', sans-serif;font-weight:normal;">对比</div>
<div class="t" style="left:50px;top:13px;font-size:14px;color:#bcbcbc;font-family:'Liberation Sans', sans-serif;font-weight:normal;">自定义周期</div>
<div class="t" style="left:145px;top:13px;font-size:14px;color:#bcbcbc;font-family:'Liberation Sans', sans-serif;font-weight:normal;">分时</div>
<div class="t" style="left:185px;top:13px;font-size:14px;color:#bcbcbc;font-family:'Liberation Sans', sans-serif;font-weight:normal;">1分</div>
<div class="t" style="left:219px;top:13px;font-size:14px;color:#bcbcbc;font-family:'Liberation Sans', sans-serif;font-weight:normal;">3分</div>
<div class="t" style="left:253px;top:13px;font-size:14px;color:#bcbcbc;font-family:'Liberation Sans', sans-serif;font-weight:normal;">5分</div>
<div class="t" style="left:288px;top:13px;font-size:14px;color:#bcbcbc;font-family:'Liberation Sans', sans-serif;font-weight:normal;">10分</div>
<div class="t" style="left:330px;top:13px;font-size:14px;color:#bcbcbc;font-family:'Liberation Sans', sans-serif;font-weight:normal;">15分</div>
<div class="t" style="left:372px;top:13px;font-size:14px;color:#bcbcbc;font-family:'Liberation Sans', sans-serif;font-weight:normal;">30分</div>
<div class="t" style="left:415px;top:13px;font-size:14px;color:#bcbcbc;font-family:'Liberation Sans', sans-serif;font-weight:normal;">1时</div>
<div class="t" style="left:449px;top:13px;font-size:14px;color:#bcbcbc;font-family:'Liberation Sans', sans-serif;font-weight:normal;">2时</div>
<div class="t" style="left:483px;top:13px;font-size:14px;color:#bcbcbc;font-family:'Liberation Sans', sans-serif;font-weight:normal;">3时</div>
<div class="t" style="left:516px;top:13px;font-size:14px;color:#4d8ff0;font-family:'Liberation Sans', sans-serif;font-weight:normal;">4时</div>
<div class="t" style="left:552px;top:13px;font-size:14px;color:#bcbcbc;font-family:'Liberation Sans', sans-serif;font-weight:normal;">6时</div>
<div class="t" style="left:585px;top:13px;font-size:14px;color:#bcbcbc;font-family:'Liberation Sans', sans-serif;font-weight:normal;">12时</div>
<div class="t" style="left:628px;top:13px;font-size:14px;color:#bcbcbc;font-family:'Liberation Sans', sans-serif;font-weight:normal;">1日</div>
<div class="t" style="left:662px;top:13px;font-size:14px;color:#bcbcbc;font-family:'Liberation Sans', sans-serif;font-weight:normal;">2日</div>
<div class="t" style="left:696px;top:13px;font-size:14px;color:#bcbcbc;font-family:'Liberation Sans', sans-serif;font-weight:normal;">3日</div>
<div class="t" style="left:730px;top:13px;font-size:14px;color:#bcbcbc;font-family:'Liberation Sans', sans-serif;font-weight:normal;">5日</div>
<div class="t" style="left:764px;top:13px;font-size:14px;color:#bcbcbc;font-family:'Liberation Sans', sans-serif;font-weight:normal;">周K</div>
<div class="t" style="left:850px;top:13px;font-size:13px;color:#bcbcbc;font-family:'Liberation Sans', sans-serif;font-weight:normal;">1秒</div>
<div class="t" style="left:-5px;top:44px;font-size:12px;letter-spacing:-0.6px;font-family:'Liberation Mono', monospace;color:#e0604c">-142.05)</div>
<div class="t" style="left:61px;top:44px;font-size:12px;letter-spacing:-0.6px;font-family:'Liberation Mono', monospace;color:#b4b4b4">振幅:<span style="color:#e0604c">0.94%</span></div>
<div class="t" style="left:468px;top:35px;font-size:21px;color:#f22020;font-family:'Liberation Sans', sans-serif;font-weight:normal;">吉星谈币：12.10比特币技术分析图</div>
<div class="t" style="left:74px;top:85px;font-size:12px;letter-spacing:-0.6px;font-family:'Liberation Mono', monospace;color:#d0d0d0">19888</div>
<div class="t" style="left:686px;top:192px;font-size:12px;letter-spacing:-0.6px;font-family:'Liberation Mono', monospace;color:#d0d0d0">18379.84</div>
<div class="t" style="left:652px;top:210px;font-size:12px;letter-spacing:-0.6px;font-family:'Liberation Mono', monospace;color:#d0d0d0">18154.24</div>
<div class="t" style="left:641px;top:243px;font-size:12px;letter-spacing:-0.6px;font-family:'Liberation Mono', monospace;color:#d0d0d0">17744.83</div>
<div class="t c" style="left:883px;width:68px;top:75px;font-size:12px;color:#c8c8c8;font-weight:bold">20000.00</div>
<div class="t c" style="left:883px;width:68px;top:116px;font-size:12px;color:#c8c8c8;font-weight:bold">19500.00</div>
<div class="t c" style="left:883px;width:68px;top:156px;font-size:12px;color:#c8c8c8;font-weight:bold">19000.00</div>
<div class="t c" style="left:883px;width:68px;top:196px;font-size:12px;color:#c8c8c8;font-weight:bold">18500.00</div>
<div class="t c" style="left:883px;width:68px;top:237px;font-size:12px;color:#c8c8c8;font-weight:bold">18000.00</div>
<div class="t c" style="left:883px;width:68px;top:277px;font-size:12px;color:#c8c8c8;font-weight:bold">17500.00</div>
<div class="t c" style="left:883px;width:68px;top:318px;font-size:12px;color:#c8c8c8;font-weight:bold">17000.00</div>
<div class="t c" style="left:883px;width:68px;top:358px;font-size:12px;color:#c8c8c8;font-weight:bold">16500.00</div>
<div class="t c" style="left:883px;width:68px;top:399px;font-size:12px;color:#c8c8c8;font-weight:bold">16000.00</div>
<div class="t" style="left:882px;top:201px;width:71px;height:20px;background:rgba(192,20,20,0.88)"></div>
<div class="t" style="left:882px;top:222px;width:71px;height:20px;background:rgba(192,20,20,0.88)"></div>
<div class="t" style="left:882px;top:211px;width:6px;height:1px;background:#f0f0f0"></div>
<div class="t c" style="left:883px;width:68px;top:205px;font-size:12px;color:#ffffff;font-weight:bold">18395.75</div>
<div class="t c" style="left:883px;width:68px;top:226px;font-size:12px;color:#ffffff;font-weight:bold">02:11:45</div>
<div class="t c" style="left:883px;width:68px;top:459px;font-size:12px;color:#c8c8c8;font-weight:bold">500.00</div>
<div class="t c" style="left:883px;width:68px;top:521px;font-size:12px;color:#c8c8c8;font-weight:bold">0.00</div>
<div class="t c" style="left:883px;width:68px;top:583px;font-size:12px;color:#c8c8c8;font-weight:bold">-500.00</div>
<div class="t c" style="left:883px;width:68px;top:640px;font-size:12px;color:#c8c8c8;font-weight:bold">100.00</div>
<div class="t c" style="left:883px;width:68px;top:657px;font-size:12px;color:#c8c8c8;font-weight:bold">80.00</div>
<div class="t c" style="left:883px;width:68px;top:683px;font-size:12px;color:#c8c8c8;font-weight:bold">50.00</div>
<div class="t c" style="left:883px;width:68px;top:708px;font-size:12px;color:#c8c8c8;font-weight:bold">20.00</div>
<div class="t c" style="left:883px;width:68px;top:725px;font-size:12px;color:#c8c8c8;font-weight:bold">0.00</div>
<div class="t c" style="left:883px;width:68px;top:766px;font-size:12px;color:#c8c8c8;font-weight:bold">100.00</div>
<div class="t c" style="left:883px;width:68px;top:818px;font-size:12px;color:#c8c8c8;font-weight:bold">50.00</div>
<div class="t" style="left:-4.2px;top:610px;font-size:12px;color:#a8a8a8;font-family:'Liberation Sans', sans-serif;font-weight:normal;transform:scaleX(0.95);transform-origin:0 0;">MTM</div>
<div class="t" style="left:32.3px;top:610px;font-size:12px;color:#a8a8a8;font-family:'Liberation Sans', sans-serif;font-weight:normal;transform:scaleX(0.929);transform-origin:0 0;">BOLL</div>
<div class="t" style="left:71.6px;top:610px;font-size:12px;color:#a8a8a8;font-family:'Liberation Sans', sans-serif;font-weight:normal;transform:scaleX(0.85);transform-origin:0 0;">PSY</div>
<div class="t" style="left:101.4px;top:610px;font-size:12px;color:#5e5e5e;font-family:'Liberation Sans', sans-serif;font-weight:normal;transform:scaleX(0.951);transform-origin:0 0;">StochRSI</div>
<div class="t" style="left:160.5px;top:610px;font-size:12px;color:#a8a8a8;font-family:'Liberation Sans', sans-serif;font-weight:normal;transform:scaleX(0.957);transform-origin:0 0;">SMI</div>
<div class="t" style="left:191.4px;top:610px;font-size:12px;color:#a8a8a8;font-family:'Liberation Sans', sans-serif;font-weight:normal;transform:scaleX(0.905);transform-origin:0 0;">CCI</div>
<div class="t" style="left:220.3px;top:610px;font-size:12px;color:#a8a8a8;font-family:'Liberation Sans', sans-serif;font-weight:normal;transform:scaleX(0.965);transform-origin:0 0;">MFI</div>
<div class="t" style="left:249.9px;top:610px;font-size:12px;color:#a8a8a8;font-family:'Liberation Sans', sans-serif;font-weight:normal;transform:scaleX(0.952);transform-origin:0 0;">ATR</div>
<div class="t" style="left:282.3px;top:610px;font-size:12px;color:#a8a8a8;font-family:'Liberation Sans', sans-serif;font-weight:normal;transform:scaleX(0.925);transform-origin:0 0;">BBW</div>
<div class="t" style="left:317.9px;top:610px;font-size:12px;color:#5e5e5e;font-family:'Liberation Sans', sans-serif;font-weight:normal;transform:scaleX(0.848);transform-origin:0 0;">SKDJ</div>
<div class="t" style="left:354.6px;top:610px;font-size:12px;color:#a8a8a8;font-family:'Liberation Sans', sans-serif;font-weight:normal;transform:scaleX(0.911);transform-origin:0 0;">BIAS</div>
<div class="t" style="left:390.0px;top:610px;font-size:12px;color:#a8a8a8;font-family:'Liberation Sans', sans-serif;font-weight:normal;transform:scaleX(0.919);transform-origin:0 0;">DPO</div>
<div class="t" style="left:424.7px;top:610px;font-size:12px;color:#a8a8a8;font-family:'Liberation Sans', sans-serif;font-weight:normal;transform:scaleX(0.988);transform-origin:0 0;">AO</div>
<div class="t" style="left:452.3px;top:610px;font-size:12px;color:#a8a8a8;font-family:'Liberation Sans', sans-serif;font-weight:normal;transform:scaleX(1.045);transform-origin:0 0;">Position</div>
<div class="t" style="left:507.5px;top:610px;font-size:12px;color:#a8a8a8;font-family:'Liberation Sans', sans-serif;font-weight:normal;transform:scaleX(1.047);transform-origin:0 0;">Fundflow</div>
<div class="t" style="left:568.4px;top:610px;font-size:12px;color:#a8a8a8;font-family:'Liberation Sans', sans-serif;font-weight:normal;transform:scaleX(0.993);transform-origin:0 0;">AI-NetVOL</div>
<div class="t" style="left:637.0px;top:610px;font-size:12px;color:#a8a8a8;font-family:'Liberation Sans', sans-serif;font-weight:normal;transform:scaleX(0.887);transform-origin:0 0;">LSUR</div>
<div class="t" style="left:675.5px;top:610px;font-size:12px;color:#a8a8a8;font-family:'Liberation Sans', sans-serif;font-weight:normal;transform:scaleX(0.909);transform-origin:0 0;">BASIS</div>
<div class="t" style="left:717.3px;top:610px;font-size:12px;color:#a8a8a8;font-family:'Liberation Sans', sans-serif;font-weight:normal;transform:scaleX(1.034);transform-origin:0 0;">TVolume</div>
<div class="t" style="left:776.9px;top:610px;font-size:12px;color:#a8a8a8;font-family:'Liberation Sans', sans-serif;font-weight:normal;transform:scaleX(0.865);transform-origin:0 0;">FTBS</div>
<div class="t" style="left:813.7px;top:610px;font-size:12px;color:#a8a8a8;font-family:'Liberation Sans', sans-serif;font-weight:normal;transform:scaleX(0.904);transform-origin:0 0;">TTSI</div>
<div class="t" style="left:-4.2px;top:740px;font-size:12px;color:#a8a8a8;font-family:'Liberation Sans', sans-serif;font-weight:normal;transform:scaleX(0.95);transform-origin:0 0;">MTM</div>
<div class="t" style="left:32.3px;top:740px;font-size:12px;color:#a8a8a8;font-family:'Liberation Sans', sans-serif;font-weight:normal;transform:scaleX(0.929);transform-origin:0 0;">BOLL</div>
<div class="t" style="left:71.6px;top:740px;font-size:12px;color:#a8a8a8;font-family:'Liberation Sans', sans-serif;font-weight:normal;transform:scaleX(0.85);transform-origin:0 0;">PSY</div>
<div class="t" style="left:101.4px;top:740px;font-size:12px;color:#4d8ff0;font-family:'Liberation Sans', sans-serif;font-weight:normal;transform:scaleX(0.951);transform-origin:0 0;">StochRSI</div>
<div class="t" style="left:160.5px;top:740px;font-size:12px;color:#a8a8a8;font-family:'Liberation Sans', sans-serif;font-weight:normal;transform:scaleX(0.957);transform-origin:0 0;">SMI</div>
<div class="t" style="left:191.4px;top:740px;font-size:12px;color:#a8a8a8;font-family:'Liberation Sans', sans-serif;font-weight:normal;transform:scaleX(0.905);transform-origin:0 0;">CCI</div>
<div class="t" style="left:220.3px;top:740px;font-size:12px;color:#a8a8a8;font-family:'Liberation Sans', sans-serif;font-weight:normal;transform:scaleX(0.965);transform-origin:0 0;">MFI</div>
<div class="t" style="left:249.9px;top:740px;font-size:12px;color:#a8a8a8;font-family:'Liberation Sans', sans-serif;font-weight:normal;transform:scaleX(0.952);transform-origin:0 0;">ATR</div>
<div class="t" style="left:282.3px;top:740px;font-size:12px;color:#a8a8a8;font-family:'Liberation Sans', sans-serif;font-weight:normal;transform:scaleX(0.925);transform-origin:0 0;">BBW</div>
<div class="t" style="left:317.9px;top:740px;font-size:12px;color:#5e5e5e;font-family:'Liberation Sans', sans-serif;font-weight:normal;transform:scaleX(0.848);transform-origin:0 0;">SKDJ</div>
<div class="t" style="left:354.6px;top:740px;font-size:12px;color:#a8a8a8;font-family:'Liberation Sans', sans-serif;font-weight:normal;transform:scaleX(0.911);transform-origin:0 0;">BIAS</div>
<div class="t" style="left:390.0px;top:740px;font-size:12px;color:#a8a8a8;font-family:'Liberation Sans', sans-serif;font-weight:normal;transform:scaleX(0.919);transform-origin:0 0;">DPO</div>
<div class="t" style="left:424.7px;top:740px;font-size:12px;color:#a8a8a8;font-family:'Liberation Sans', sans-serif;font-weight:normal;transform:scaleX(0.988);transform-origin:0 0;">AO</div>
<div class="t" style="left:452.3px;top:740px;font-size:12px;color:#a8a8a8;font-family:'Liberation Sans', sans-serif;font-weight:normal;transform:scaleX(1.045);transform-origin:0 0;">Position</div>
<div class="t" style="left:507.5px;top:740px;font-size:12px;color:#a8a8a8;font-family:'Liberation Sans', sans-serif;font-weight:normal;transform:scaleX(1.047);transform-origin:0 0;">Fundflow</div>
<div class="t" style="left:568.4px;top:740px;font-size:12px;color:#a8a8a8;font-family:'Liberation Sans', sans-serif;font-weight:normal;transform:scaleX(0.993);transform-origin:0 0;">AI-NetVOL</div>
<div class="t" style="left:637.0px;top:740px;font-size:12px;color:#a8a8a8;font-family:'Liberation Sans', sans-serif;font-weight:normal;transform:scaleX(0.887);transform-origin:0 0;">LSUR</div>
<div class="t" style="left:675.5px;top:740px;font-size:12px;color:#a8a8a8;font-family:'Liberation Sans', sans-serif;font-weight:normal;transform:scaleX(0.909);transform-origin:0 0;">BASIS</div>
<div class="t" style="left:717.3px;top:740px;font-size:12px;color:#a8a8a8;font-family:'Liberation Sans', sans-serif;font-weight:normal;transform:scaleX(1.034);transform-origin:0 0;">TVolume</div>
<div class="t" style="left:776.9px;top:740px;font-size:12px;color:#a8a8a8;font-family:'Liberation Sans', sans-serif;font-weight:normal;transform:scaleX(0.865);transform-origin:0 0;">FTBS</div>
<div class="t" style="left:813.7px;top:740px;font-size:12px;color:#a8a8a8;font-family:'Liberation Sans', sans-serif;font-weight:normal;transform:scaleX(0.904);transform-origin:0 0;">TTSI</div>
</body></html>
